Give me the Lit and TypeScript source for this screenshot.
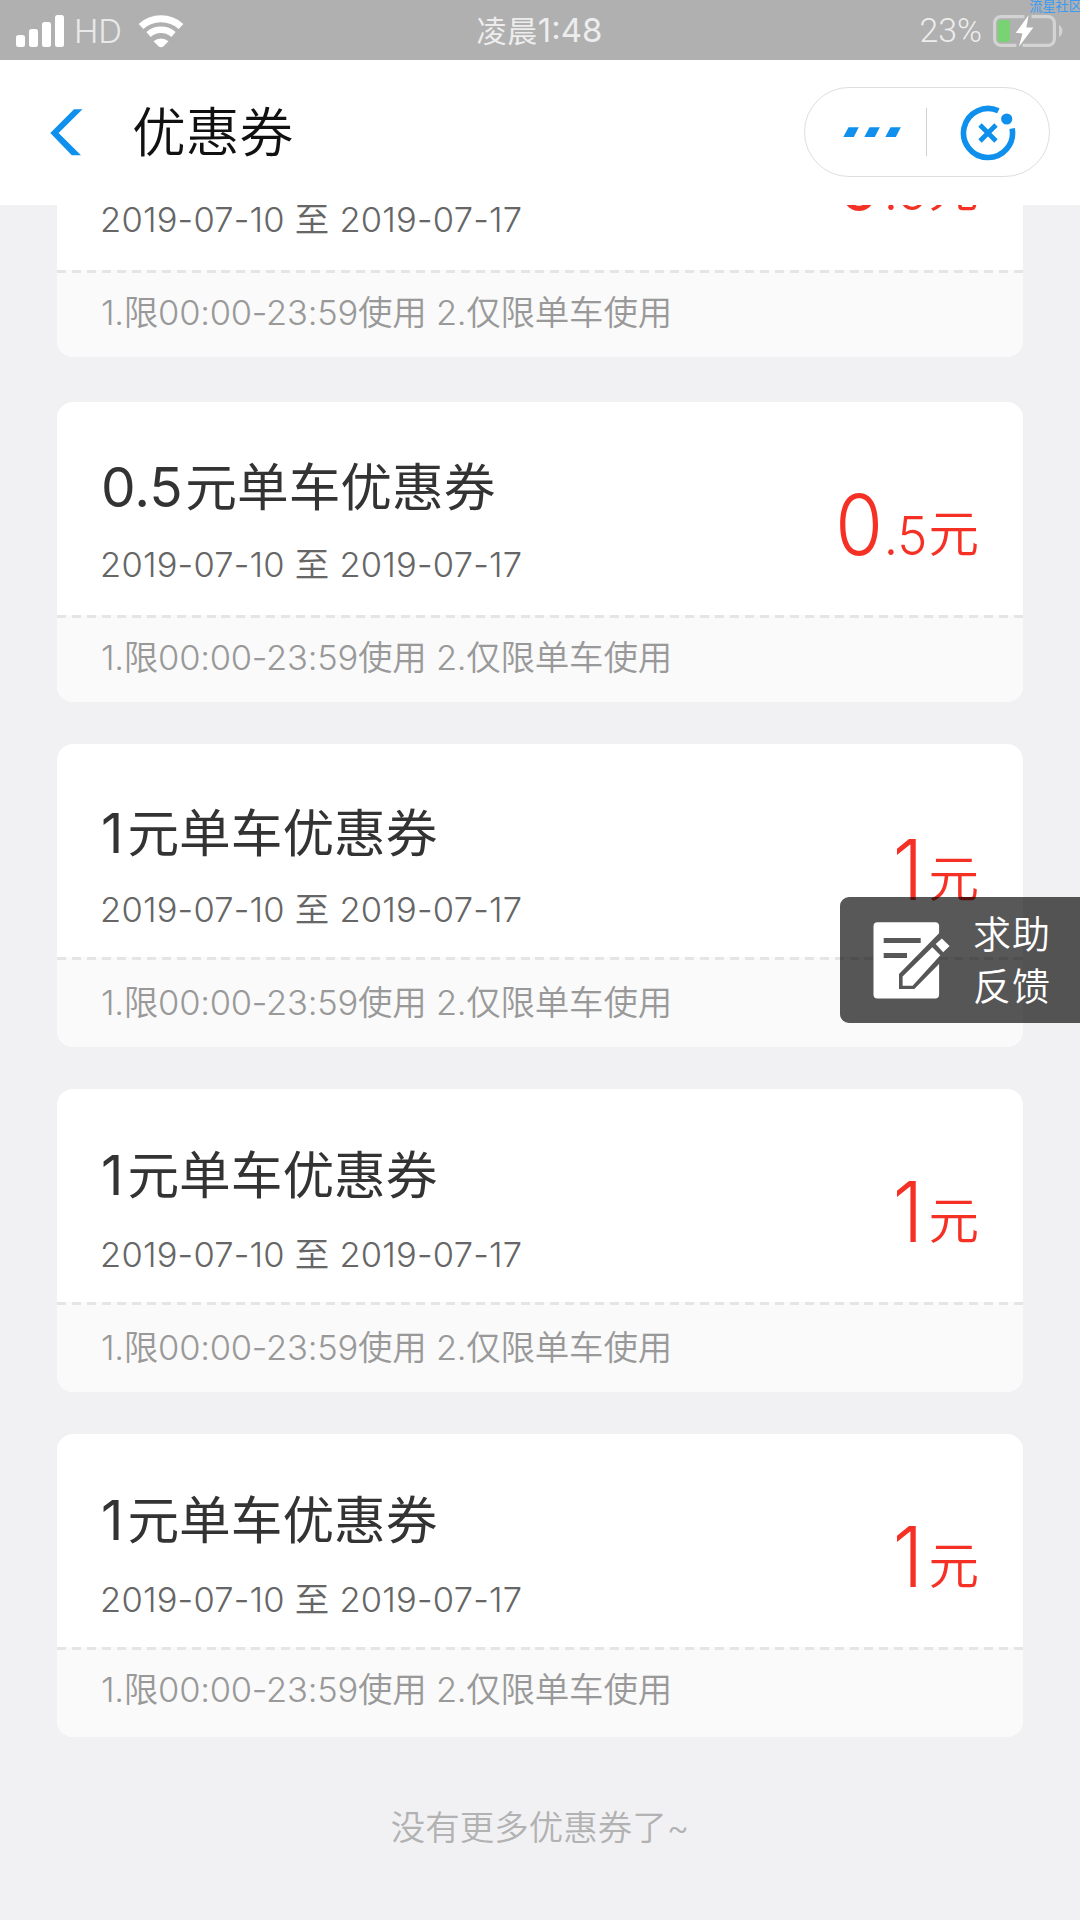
import { LitElement, html, css, svg } from "lit";
import { customElement, property } from "lit/decorators.js";

interface Coupon {
  amount: string;
  from: string;
  to: string;
  note: string;
}

const NOTE = "1.限00:00-23:59使用 2.仅限单车使用";
const coupon = (amount: string): Coupon => ({ amount, from: "2019-07-10", to: "2019-07-17", note: NOTE });
const COUPONS: Coupon[] = [coupon("0.5"), coupon("0.5"), coupon("1"), coupon("1"), coupon("1")];

@customElement("status-bar")
class StatusBar extends LitElement {
  static styles = css`
    :host { display: block; font-family: Inter, "Noto Sans CJK SC", sans-serif; font-weight: 350; color: #ededed; }
    .bar { position: relative; display: grid; grid-template-columns: 1fr auto 1fr; align-items: center; height: 60px;
      padding: 0 15px 0 16px; background: #b0b0b0; box-sizing: border-box; font-size: 33px; line-height: 60px; overflow: hidden; }
    .left, .right { display: flex; align-items: center; }
    .right { justify-content: flex-end; }
    svg { display: block; flex: none; }
    .hd { margin: 0 0 0 8px; width: 64px; letter-spacing: -0.2px; color: #e8e8e8; font-weight: 320; }
    .time { padding-right: 2px; white-space: nowrap; }
    .han { font-size: 30px; letter-spacing: 0.7px; font-weight: 400; }
    .clock { letter-spacing: 0; font-weight: 400; }
    .pct { font-family: Roboto, sans-serif; font-weight: 350; font-size: 33.8px; margin: 1px 11px 0 0; }
    .mark { position: absolute; right: -2px; top: -1px; font-size: 13.2px; line-height: 15px; font-weight: 400; color: #389bf5; }
  `;
  render() {
    return html`
      <div class="bar">
        <div class="left">
          <svg width="50" height="60" viewBox="16 0 50 60" fill="#fff">
            <rect x="16" y="34" width="9" height="12" rx="2.5" /><rect x="29" y="28" width="9" height="18" rx="2.5" />
            <rect x="42" y="21" width="9" height="25" rx="2.5" /><rect x="55" y="14" width="9" height="32" rx="2.5" />
          </svg>
          <span class="hd">HD</span>
          <svg width="46" height="60" viewBox="138 0 46 60">
            <g fill="none" stroke="#fff">
              <path d="M141 25.5a30 30 0 0 1 40 0" stroke-width="7" />
              <path d="M148.5 33.5a19 19 0 0 1 25 0" stroke-width="6.5" />
            </g>
            <path d="M153.5 40.2a11.5 11.5 0 0 1 15 0l-5 5a3.4 3.4 0 0 1-5 0z" fill="#fff" />
          </svg>
        </div>
        <div class="time"><span class="han">凌晨</span><span class="clock">1:48</span></div>
        <div class="right">
          <span class="pct">23%</span>
          <svg width="72" height="60" viewBox="993 0 72 60">
            <path d="M1024.5 15.6H1001a6.4 6.4 0 0 0-6.4 6.4v16a6.4 6.4 0 0 0 6.4 6.4h15.3M1022.5 44.4H1048a6.4 6.4 0 0 0 6.4-6.4V22a6.4 6.4 0 0 0-6.4-6.4h-16.5" fill="none" stroke="#d3d3d3" stroke-width="3.2" />
            <path d="M1059 24a7 7 0 0 1 0 12z" fill="#d3d3d3" />
            <rect x="997.7" y="19" width="12.3" height="22" rx="2" fill="#79d274" />
            <path d="M1028.7 14l-13 17.8 6.8.6-3.6 13.4 14.4-19.2h-7z" fill="#fff" />
          </svg>
        </div>
        <div class="mark">流星社区</div>
      </div>
    `;
  }
}

@customElement("nav-bar")
class NavBar extends LitElement {
  static styles = css`
    :host { display: block; font-family: "Noto Sans CJK SC", sans-serif; }
    .bar { display: flex; align-items: center; height: 145px; padding: 0 30px 0 50px; box-sizing: border-box; background: #fff; }
    svg { display: block; flex: none; }
    .title { flex: 1; margin: 0 0 8px 48px; font-size: 53.8px; line-height: 80px; font-weight: 350; color: #111; }
    .capsule { display: flex; align-items: center; width: 246px; height: 90px; margin-top: -1px; border: 1px solid #dedede; border-radius: 45px; box-sizing: border-box; }
    .dots { margin-left: 38px; }
    .split { width: 1px; height: 48px; margin-left: 23px; background: #d0d0d0; }
    .close { margin: 1px 0 0 31px; }
  `;
  render() {
    return html`
      <div class="bar">
        <svg width="34" height="48" viewBox="50 108.7 34 48" fill="#1090ed">
          <path d="M74 108.9h8.5L58.6 132.7 81 155h-9.2L50.3 132.7z" />
        </svg>
        <h1 class="title">优惠券</h1>
        <div class="capsule">
          <svg class="dots" width="60" height="12" viewBox="843 126 60 12" fill="#1090ed">
            ${[0, 21, 42].map((dx) => svg`<path transform="translate(${dx} 0)" d="M848.5 127.3h10.3l-5 9.7h-10.5z" />`)}
          </svg>
          <div class="split"></div>
          <svg class="close" width="60" height="60" viewBox="0 0 60 60" fill="none" stroke="#1090ed">
            <path d="M54.1 25.5A24.5 24.5 0 1 1 40.4 7.8" stroke-width="5.6" />
            <path d="M22 22l16 16M38 22L22 38" stroke-width="4.8" />
            <circle cx="48.7" cy="16" r="5.6" fill="#1090ed" stroke="none" />
          </svg>
        </div>
      </div>
    `;
  }
}

@customElement("coupon-card")
class CouponCard extends LitElement {
  @property({ attribute: false }) coupon!: Coupon;

  static styles = css`
    :host { display: block; font-family: Inter, "Noto Sans CJK SC", sans-serif; }
    .card { display: flex; flex-direction: column; height: var(--card-h, 303px); border-radius: 16px; overflow: hidden; background: #fff; }
    .main { flex: none; display: flex; justify-content: space-between; height: 213px; padding: 0 44px; box-sizing: border-box; }
    .title { margin: var(--title-top, 57px) 0 0; font-size: 51.7px; line-height: 60px; font-weight: 400; color: #333; white-space: nowrap; visibility: var(--title-visibility, visible); }
    .num { font-size: 55px; line-height: 0; font-weight: 370; margin-right: 2.5px; }
    .num.one { margin-right: 4px; }
    .cjk { position: relative; top: -1px; }
    .date { margin: var(--date-gap, 24.5px) 0 0 -1px; font-size: 34.5px; line-height: 48px; font-weight: 340; letter-spacing: 0.2px; color: #666; white-space: nowrap; }
    .price { margin-top: var(--price-top, 75.4px); height: 96px; font-size: 84px; line-height: 96px; font-weight: 330; color: #f53126; white-space: nowrap; }
    .whole { display: inline-block; line-height: 96px; transform: translateX(1px) scaleX(0.92); transform-origin: right; }
    .whole.one { margin-right: 6px; }
    .frac { display: inline-block; font-size: 54px; line-height: 0; transform: scaleX(0.94); transform-origin: 60% 50%; }
    .unit { position: relative; top: -3px; font-size: 50.5px; line-height: 0; font-weight: 350; }
    .dash { flex: none; height: 3px; background: repeating-linear-gradient(90deg, #e5e5e5 0 9px, #fafafa 9px 14.953px); }
    .note { flex: 1; padding: var(--note-top, 19.4px) 44px 0; font-size: 34.5px; line-height: 48px; font-weight: 340; letter-spacing: -0.24px; color: #999; background: #fafafa; white-space: nowrap; }
  `;
  render() {
    const { amount, from, to, note } = this.coupon;
    const [whole, frac] = amount.split(".");
    const one = frac ? "" : "one";
    return html`
      <article class="card">
        <div class="main">
          <div class="info">
            <h2 class="title"><span class="num ${one}">${amount}</span><span class="cjk">元单车优惠券</span></h2>
            <p class="date">${from} 至 ${to}</p>
          </div>
          <div class="price"><span class="whole ${one}">${whole}</span>${frac ? html`<span class="frac">.${frac}</span>` : ""}<span class="unit">元</span></div>
        </div>
        <div class="dash"></div>
        <div class="note">${note}</div>
      </article>
    `;
  }
}

@customElement("feedback-tab")
class FeedbackTab extends LitElement {
  static styles = css`
    :host { display: block; font-family: "Noto Sans CJK SC", sans-serif; }
    .tab { display: flex; width: 240px; height: 126px; border-radius: 9px 0 0 9px; background: rgba(0, 0, 0, 0.655); color: #fff; }
    svg { display: block; flex: none; }
    .label { margin: 9px 0 0 13px; font-size: 38px; line-height: 52px; font-weight: 350; letter-spacing: 1px; }
  `;
  render() {
    return html`
      <div class="tab">
        <svg width="120" height="126" viewBox="0 0 120 126" fill="#fff">
          <mask id="cut">
            <rect width="120" height="126" fill="#fff" />
            <path d="M43.7 41h37v5h-37zM43.7 56H67v5H43.7zM100 35.3L59 77v15h15.3L100 66z" fill="#000" />
          </mask>
          <rect x="33.5" y="25.2" width="65.6" height="76.4" rx="4" mask="url(#cut)" />
          <path d="M92.3 50.3L62.6 79.6v9.1h10l27.7-30.4zM101.8 41.6l7.8 7.4-6.4 6.3-7.5-8.3z" />
        </svg>
        <div class="label">求助<br />反馈</div>
      </div>
    `;
  }
}

@customElement("app-root")
class AppRoot extends LitElement {
  static styles = css`
    :host { display: block; }
    .page { position: relative; display: flex; flex-direction: column; height: 1920px; overflow: hidden; background: #f1f1f4; }
    .scroll { flex: 1; overflow: hidden; }
    .list { display: flex; flex-direction: column; gap: 42px; margin-top: -148px; padding: 0 57px; }
    .item:nth-child(-n + 2) { --card-h: 300px; --title-top: 56px; --date-gap: 22.5px; --note-top: 16.4px; }
    .item:first-child { margin-bottom: 3px; --title-visibility: hidden; }
    .item:nth-child(3) { --title-top: 60px; --date-gap: 21.5px; --price-top: 78.4px; }
    .item:nth-child(5) { --note-top: 16.4px; }
    .end { margin: 67px 0 0; text-align: center; font: 340 34.5px/48px Inter, "Noto Sans CJK SC", sans-serif; color: #b2b2b2; }
    .feedback { position: absolute; right: 0; top: 897px; }
  `;
  render() {
    return html`
      <main class="page">
        <status-bar></status-bar>
        <nav-bar></nav-bar>
        <div class="scroll">
          <div class="list">${COUPONS.map((c) => html`<coupon-card class="item" .coupon=${c}></coupon-card>`)}</div>
          <p class="end">没有更多优惠券了~</p>
        </div>
        <feedback-tab class="feedback"></feedback-tab>
      </main>
    `;
  }
}
